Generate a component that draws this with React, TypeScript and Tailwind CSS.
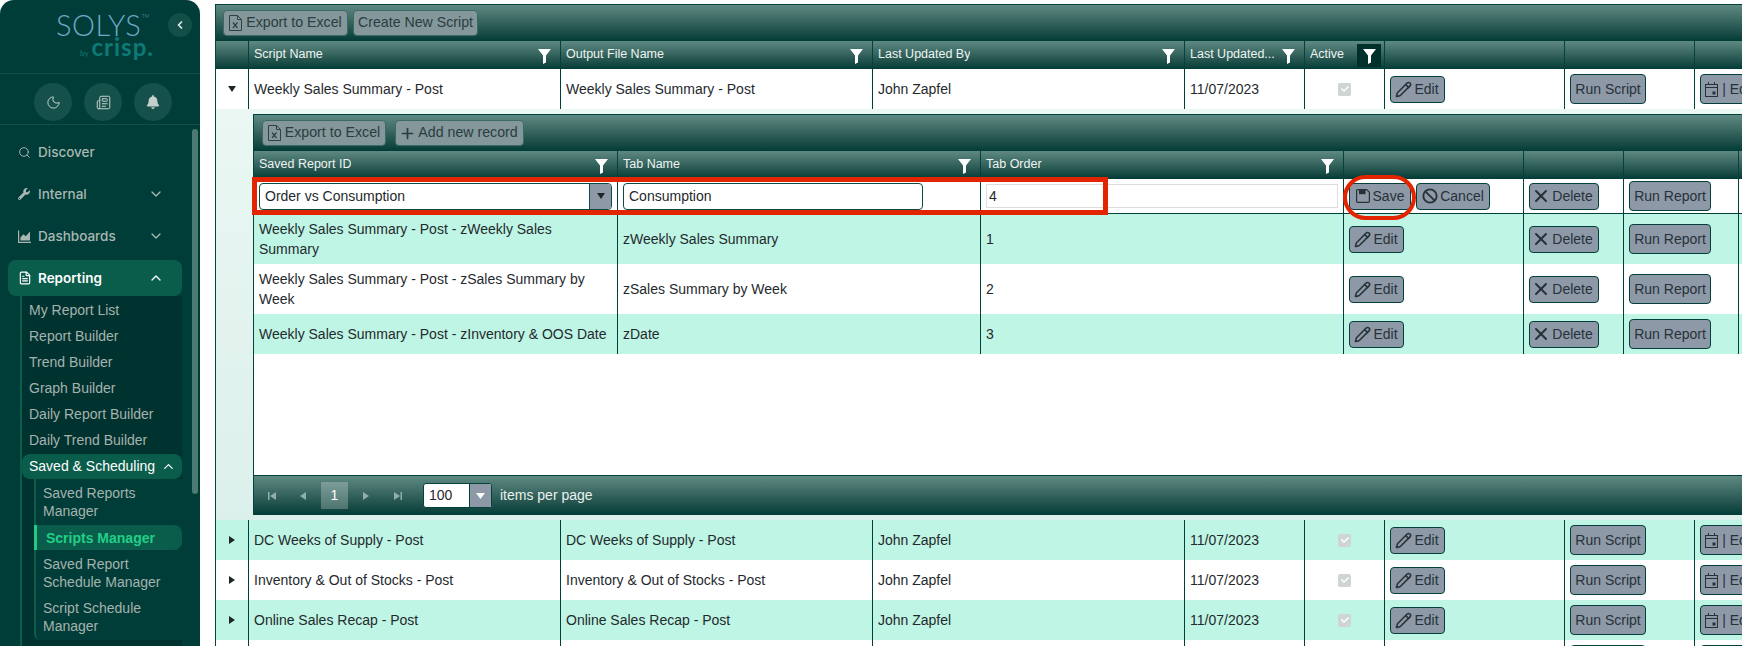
import { Ban, ChevronDown, ChevronLeft, ChevronUp, FileText, Moon, Newspaper, Pencil, Plus, Search, X } from "lucide-react";
import { FaBell, FaCheck, FaWrench } from "react-icons/fa";
import type { ReactNode } from "react";

const mainCols = "grid grid-cols-[32px_312px_312px_312px_120px_80px_180px_130px_130px]";
const nestedCols = "grid grid-cols-[363px_363px_363px_180px_100px_115px_1fr]";
const barGradient = "bg-gradient-to-b from-[#5f8a83] to-[#013c37]";

function Funnel() {
  return (
    <svg width="13" height="15" viewBox="0 0 13 15" className="shrink-0 mt-[2px]">
      <path d="M0 0h13L8 6.5V13.5L5 15V6.5z" fill="#fff" />
    </svg>
  );
}

function ExcelIcon() {
  return (
    <svg width="13" height="16" viewBox="0 0 13 16" fill="none" stroke="#2f4245" strokeWidth="1">
      <path d="M.5.5h8l4 4v11H.5z" />
      <path d="M8.5.5v4h4" />
      <path d="M4 7.5l4.5 5.5M8.5 7.5L4 13" strokeWidth="1.2" />
    </svg>
  );
}

function FloppyIcon() {
  return (
    <svg width="14" height="14" viewBox="0 0 14 14" fill="none" stroke="#263238" strokeWidth="1.2">
      <path d="M1.6.6h9l2.8 2.6v9a1.2 1.2 0 0 1-1.2 1.2H1.6A1.2 1.2 0 0 1 .6 12.2V1.6a1 1 0 0 1 1-1z" />
      <rect x="3" y="0.6" width="6.5" height="4.6" fill="#263238" stroke="none" />
    </svg>
  );
}

function CalendarIcon() {
  return (
    <svg width="13" height="15" viewBox="0 0 13 15" fill="none" stroke="#263238" strokeWidth="1" className="shrink-0">
      <rect x=".5" y="2.5" width="12" height="12" />
      <path d="M.5 5.5h12M3.5 0v3M9.5 0v3" />
      <rect x="7.5" y="9.5" width="3" height="3" fill="#263238" stroke="none" />
    </svg>
  );
}

function AreaIcon() {
  return (
    <svg width="13" height="13" viewBox="0 0 13 13" fill="currentColor">
      <path d="M0 .5h1.2v11.3H13V13H0z" />
      <path d="M2.4 10.6V7.4l3-3.2 2.4 2L12 1.6v9z" />
    </svg>
  );
}

function Btn({ children, className }: { children: ReactNode; className: string }) {
  return (
    <button className={`flex items-center justify-center shrink-0 rounded-[4px] border border-[#04403b] bg-[#8e99a8] text-[14px] text-[#263238] ${className}`}>
      {children}
    </button>
  );
}

function ToolBtn({ children, className }: { children: ReactNode; className: string }) {
  return (
    <button className={`flex items-center justify-center gap-[4px] h-[26px] rounded-[4px] border border-[#3c6a66] bg-[#84979b] text-[14.2px] text-[#2a3d40] ${className}`}>
      {children}
    </button>
  );
}

function EditBtn({ className }: { className: string }) {
  return (
    <Btn className={`gap-[2px] h-[27px] ${className}`}>
      <Pencil size={17} strokeWidth={2.2} className="-ml-[1px]" />
      Edit
    </Btn>
  );
}

function DeleteBtn() {
  return (
    <Btn className="w-[70px] h-[27px] gap-[5px]">
      <X size={20} strokeWidth={2.4} className="-mx-[4px]" />
      Delete
    </Btn>
  );
}

function HeadCell({ label, filter = true, first = false }: { label?: string; filter?: boolean; first?: boolean }) {
  return (
    <div className={`flex items-center justify-between pl-[5px] pr-[9px] text-[12.5px] text-[#eef4f2] ${first ? "" : "border-l border-[#03423d]"}`}>
      <span className="truncate -mt-[2px]">{label}</span>
      {filter && <Funnel />}
    </div>
  );
}

function Cell({ children, className = "" }: { children?: ReactNode; className?: string }) {
  return <div className={`flex items-center border-l border-[#00403a] pl-[5px] overflow-hidden ${className}`}>{children}</div>;
}

function ScriptRow({ name, mint, open = false }: { name: string; mint: boolean; open?: boolean }) {
  return (
    <div className={`${mainCols} h-[40px] text-[14px] text-[#1f2a2e] ${mint ? "bg-[#bff5e4]" : "bg-white"}`}>
      <div className="flex items-center justify-center">
        {open ? (
          <svg width="8" height="6" viewBox="0 0 8 6"><path d="M0 0h8L4 6z" fill="#1c2628" /></svg>
        ) : (
          <svg width="6" height="8" viewBox="0 0 6 8"><path d="M0 0v8l6-4z" fill="#1c2628" /></svg>
        )}
      </div>
      <Cell>{name}</Cell>
      <Cell>{name}</Cell>
      <Cell>John Zapfel</Cell>
      <Cell>11/07/2023</Cell>
      <Cell className="pl-[33px]">
        <span className="flex items-center justify-center w-[13px] h-[13px] rounded-[2px] bg-[#cfd5d3]">
          <FaCheck size={8} className="text-white" />
        </span>
      </Cell>
      <Cell><EditBtn className="w-[55px]" /></Cell>
      <Cell><Btn className="w-[76px] h-[30px]">Run Script</Btn></Cell>
      <Cell>
        <Btn className="w-[59px] h-[30px] gap-[4px] whitespace-nowrap">
          <CalendarIcon />
          | Edit
        </Btn>
      </Cell>
    </div>
  );
}

function TabRow({ id, tab, order, mint, height }: { id: string; tab: string; order: string; mint: boolean; height: string }) {
  return (
    <div className={`${nestedCols} ${height} text-[14px] text-[#1f2a2e] ${mint ? "bg-[#bff5e4]" : "bg-white"}`}>
      <div className="flex items-center pl-[5px] pr-[10px] leading-[20px]">{id}</div>
      <Cell>{tab}</Cell>
      <Cell>{order}</Cell>
      <Cell><EditBtn className="w-[55px]" /></Cell>
      <Cell><DeleteBtn /></Cell>
      <Cell><Btn className="w-[82px] h-[30px]">Run Report</Btn></Cell>
      <Cell />
    </div>
  );
}

function Pager() {
  const icon = "#8fb0aa";
  return (
    <div className={`flex items-center justify-between h-[39px] pr-[12px] text-[14px] text-[#e9f1ef] ${barGradient}`}>
      <div className="flex items-center">
        <div className="flex items-center w-[67px] pl-[14px] gap-[24px]">
          <svg width="8" height="8" viewBox="0 0 8 8"><path d="M0 0h1.5v8H0zM8 0v8L2 4z" fill={icon} /></svg>
          <svg width="6" height="8" viewBox="0 0 6 8"><path d="M6 0v8L0 4z" fill={icon} /></svg>
        </div>
        <div className="flex items-center justify-center w-[27px] h-[27px] bg-white/25 text-white">1</div>
        <div className="flex items-center w-[75px] pl-[15px] gap-[25px]">
          <svg width="6" height="8" viewBox="0 0 6 8"><path d="M0 0v8l6-4z" fill={icon} /></svg>
          <svg width="8" height="8" viewBox="0 0 8 8"><path d="M0 0v8l6-4zM6.5 0H8v8H6.5z" fill={icon} /></svg>
        </div>
        <div className="flex h-[25px] w-[69px] rounded-[3px] overflow-hidden bg-white border border-[#03423d]">
          <span className="flex-1 flex items-center pl-[5px] text-[#1f2a2e]">100</span>
          <span className="flex items-center justify-center w-[22px] bg-[#8e99a8] border-l border-[#03423d]">
            <svg width="9" height="6" viewBox="0 0 9 6"><path d="M0 0h9L4.5 6z" fill="#fff" /></svg>
          </span>
        </div>
        <span className="ml-[8px]">items per page</span>
      </div>
      <span>1 - 4 of 4 items</span>
    </div>
  );
}

function NestedGrid() {
  return (
    <div className="w-[1595px] border-l border-t border-[#03423d] bg-white">
      <div className={`flex items-center gap-[9px] h-[36px] pl-[8px] ${barGradient}`}>
        <ToolBtn className="w-[124px]"><ExcelIcon />Export to Excel</ToolBtn>
        <ToolBtn className="w-[129px]"><Plus size={17} strokeWidth={2.4} className="-mx-[2px]" />Add new record</ToolBtn>
      </div>
      <div className={`${nestedCols} h-[28px] ${barGradient}`}>
        <HeadCell label="Saved Report ID" first />
        <HeadCell label="Tab Name" />
        <HeadCell label="Tab Order" />
        <HeadCell filter={false} />
        <HeadCell filter={false} />
        <HeadCell filter={false} />
        <HeadCell filter={false} />
      </div>
      <div className={`${nestedCols} h-[35px] border-b border-[#00403a] text-[14px] text-[#1f2a2e]`}>
        <div className="flex items-center pl-[5px]">
          <div className="flex w-[353px] h-[27px] rounded-[4px] overflow-hidden border border-[#0c4a45]">
            <input readOnly value="Order vs Consumption" className="flex-1 min-w-0 pl-[5px] outline-none" />
            <span className="flex items-center justify-center w-[22px] bg-[#8e99a8] border-l border-[#0c4a45]">
              <svg width="8" height="6" viewBox="0 0 8 6"><path d="M0 0h8L4 6z" fill="#1c2628" /></svg>
            </span>
          </div>
        </div>
        <Cell>
          <input readOnly value="Consumption" className="w-[300px] h-[27px] rounded-[4px] border border-[#0c4a45] pl-[5px] outline-none" />
        </Cell>
        <Cell>
          <input readOnly value="4" className="w-[352px] h-[24px] border border-[#dddddd] pl-[2px] outline-none" />
        </Cell>
        <Cell className="gap-[5px]">
          <Btn className="w-[62px] h-[27px] gap-[3px]"><FloppyIcon />Save</Btn>
          <Btn className="w-[74px] h-[27px] gap-[2px]"><Ban size={16} strokeWidth={2.8} />Cancel</Btn>
        </Cell>
        <Cell><DeleteBtn /></Cell>
        <Cell><Btn className="w-[82px] h-[30px]">Run Report</Btn></Cell>
        <Cell />
      </div>
      <TabRow id="Weekly Sales Summary - Post - zWeekly Sales Summary" tab="zWeekly Sales Summary" order="1" mint height="h-[50px]" />
      <TabRow id="Weekly Sales Summary - Post - zSales Summary by Week" tab="zSales Summary by Week" order="2" mint={false} height="h-[50px]" />
      <TabRow id="Weekly Sales Summary - Post - zInventory & OOS Date" tab="zDate" order="3" mint height="h-[40px]" />
      <div className="h-[121px] bg-white" />
      <div className="border-t border-[#03423d]">
        <Pager />
      </div>
    </div>
  );
}

function NavTop({ icon, label, chevron, active }: { icon: ReactNode; label: string; chevron?: "up" | "down"; active?: boolean }) {
  return (
    <div className={`flex items-center h-[36px] pl-[10px] pr-[18px] rounded-[8px] font-['Inter',sans-serif] text-[13.5px] ${active ? "bg-[#0a5c4b] text-white font-semibold" : "text-[#a9b6b2] font-medium"}`}>
      <span className="flex items-center w-[20px]">{icon}</span>
      <span className="flex-1">{label}</span>
      {chevron === "down" && <ChevronDown size={16} strokeWidth={2} />}
      {chevron === "up" && <ChevronUp size={16} strokeWidth={2} />}
    </div>
  );
}

function Sidebar() {
  const subItems = ["My Report List", "Report Builder", "Trend Builder", "Graph Builder", "Daily Report Builder", "Daily Trend Builder"];
  return (
    <aside className="relative flex flex-col w-[200px] shrink-0 h-[646px] rounded-t-[14px] bg-[#003d38] overflow-hidden">
      <div className="flex h-[74px] border-b border-[#0f4f49] pl-[56px] pr-[8px] pt-[13px]">
        <div className="flex flex-col w-[90px] font-['Lato',sans-serif]">
          <div className="relative self-start font-light text-[29px] leading-[24px] tracking-[0.5px] text-[#6fa9c9]">
            SOLYS
            <span className="absolute -right-[8px] top-[0px] text-[5px] leading-[6px] tracking-normal">TM</span>
          </div>
          <div className="flex items-baseline gap-[3px] ml-[24px] text-[#0d7a76]">
            <span className="text-[8px] leading-[20px]">by</span>
            <span className="text-[24px] leading-[20px] font-bold tracking-[1px]">crisp.</span>
          </div>
        </div>
        <button className="ml-auto flex items-center justify-center w-[24px] h-[24px] rounded-full bg-[#124f49] text-[#dfe8e5]">
          <ChevronLeft size={12} strokeWidth={3.5} />
        </button>
      </div>
      <div className="flex h-[51px] gap-[12px] pl-[34px] pt-[9px] border-b border-[#0f4f49] text-[#c5d0cd]">
        <span className="flex items-center justify-center w-[38px] h-[38px] rounded-full bg-[#15504a]"><Moon size={15} strokeWidth={1.6} /></span>
        <span className="flex items-center justify-center w-[38px] h-[38px] rounded-full bg-[#15504a]"><Newspaper size={15} strokeWidth={1.6} /></span>
        <span className="flex items-center justify-center w-[38px] h-[38px] rounded-full bg-[#15504a]"><FaBell size={14} /></span>
      </div>
      <nav className="flex-1 overflow-hidden pt-[9px] pl-[8px] pr-[18px]">
        <div className="flex flex-col gap-[6px]">
          <NavTop icon={<Search size={13} strokeWidth={1.8} />} label="Discover" />
          <NavTop icon={<FaWrench size={12} />} label="Internal" chevron="down" />
          <NavTop icon={<AreaIcon />} label="Dashboards" chevron="down" />
          <NavTop icon={<FileText size={14} strokeWidth={2} />} label="Reporting" chevron="up" active />
        </div>
        <div className="ml-[12px] border-l-2 border-[#0a5c4b] bg-[#00332f] pt-[1px] text-[14px] text-[#a5b2ae] h-[360px]">
          {subItems.map((s) => (
            <div key={s} className="flex items-center h-[26px] pl-[7px]">{s}</div>
          ))}
          <div className="flex items-center justify-between h-[25px] mt-[1px] pl-[7px] pr-[6px] rounded-[8px] bg-[#0a5c4b] text-white">
            Saved &amp; Scheduling
            <ChevronUp size={15} strokeWidth={2} />
          </div>
          <div className="ml-[12px] pb-[5px] border-l-2 border-[#0a5c4b] rounded-bl-[6px] leading-[18px] bg-[#003d38]">
            <div className="pl-[7px] pt-[5px]">Saved Reports<br />Manager</div>
            <div className="flex items-center h-[25px] mt-[5px] -ml-[2px] pl-[9px] rounded-r-[8px] border-l-[3px] border-[#22c985] bg-[#0a5c4b] text-[#22cf88] font-bold">Scripts Manager</div>
            <div className="pl-[7px] mt-[5px]">Saved Report<br />Schedule Manager</div>
            <div className="pl-[7px] mt-[8px]">Script Schedule<br />Manager</div>
          </div>
        </div>
      </nav>
      <div className="absolute left-[192px] top-[129px] w-[6px] h-[365px] rounded-full bg-[#4a7a72]" />
    </aside>
  );
}

export default function App() {
  return (
    <div className="relative flex w-[1742px] h-[646px] overflow-hidden bg-white font-['Liberation_Sans',Arial,sans-serif]">
      <Sidebar />
      <main className="flex-1 min-w-0 pl-[15px] pt-[4px] overflow-hidden">
        <div className="w-[1700px] border-l border-t border-[#03423d]">
          <div className={`flex items-center gap-[5px] h-[36px] pl-[7px] ${barGradient}`}>
            <ToolBtn className="w-[125px]"><ExcelIcon />Export to Excel</ToolBtn>
            <ToolBtn className="w-[125px]">Create New Script</ToolBtn>
          </div>
          <div className={`${mainCols} h-[28px] ${barGradient}`}>
            <div />
            <HeadCell label="Script Name" />
            <HeadCell label="Output File Name" />
            <HeadCell label="Last Updated By" />
            <HeadCell label="Last Updated..." />
            <div className="flex items-center justify-between border-l border-[#03423d] pl-[5px] pr-[3px] text-[12.5px] text-[#eef4f2]">
              <span className="-mt-[2px]">Active</span>
              <span className="flex items-center justify-center w-[24px] h-[23px] bg-[#00302c]"><Funnel /></span>
            </div>
            <HeadCell filter={false} />
            <HeadCell filter={false} />
            <HeadCell filter={false} />
          </div>
          <ScriptRow name="Weekly Sales Summary - Post" mint={false} open />
          <div className="pl-[37px] py-[5px] bg-gradient-to-b from-[#eaf7f3] to-[#dcf0eb]">
            <NestedGrid />
          </div>
          <ScriptRow name="DC Weeks of Supply - Post" mint />
          <ScriptRow name="Inventory & Out of Stocks - Post" mint={false} />
          <ScriptRow name="Online Sales Recap - Post" mint />
          <ScriptRow name="Price Recap - Post" mint={false} />
        </div>
      </main>
      <div className="absolute left-[252px] top-[177px] w-[856px] h-[38px] border-[5px] border-[#e32400]" />
      <div className="absolute left-[1343px] top-[175px] w-[73px] h-[45px] border-[4px] border-[#e32400] rounded-[23px]" />
    </div>
  );
}
